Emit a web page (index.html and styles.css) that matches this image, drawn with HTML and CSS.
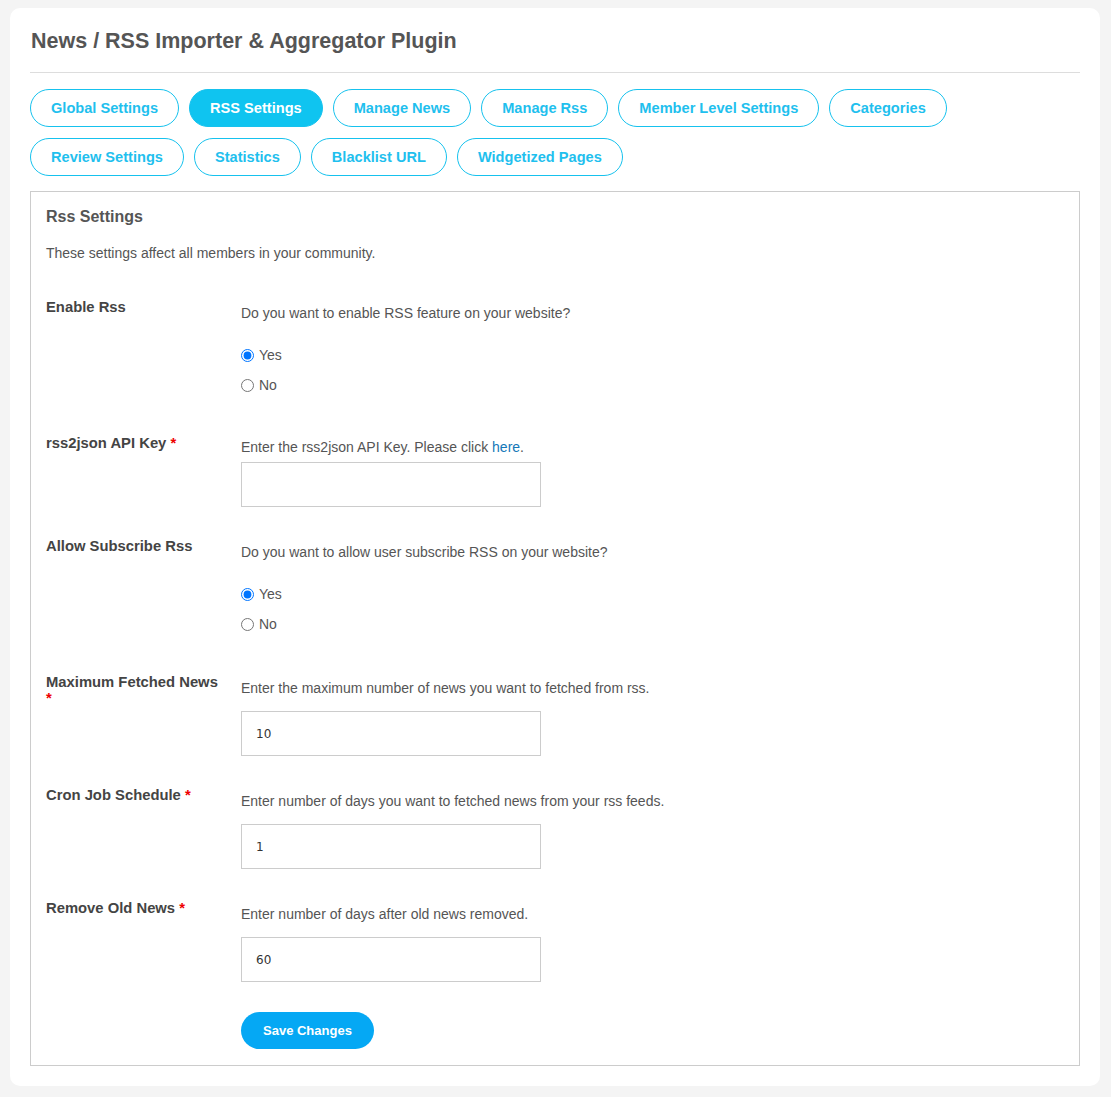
FILE: index.html
```html
<!DOCTYPE html>
<html lang="en">
<head>
  <meta charset="UTF-8">
  <meta name="viewport" content="width=device-width, initial-scale=1.0">
  <title>News / RSS Importer &amp; Aggregator Plugin</title>
  <link rel="stylesheet" href="styles.css">
</head>
<body>
  <div class="card">
    <h1>News / RSS Importer &amp; Aggregator Plugin</h1>

    <div class="tabs">
      <a class="tab" href="#">Global Settings</a>
      <a class="tab active" href="#">RSS Settings</a>
      <a class="tab" href="#">Manage News</a>
      <a class="tab" href="#">Manage Rss</a>
      <a class="tab" href="#">Member Level Settings</a>
      <a class="tab" href="#">Categories</a>
      <a class="tab" href="#">Review Settings</a>
      <a class="tab" href="#">Statistics</a>
      <a class="tab" href="#">Blacklist URL</a>
      <a class="tab" href="#">Widgetized Pages</a>
    </div>

    <form class="settings">
      <h2>Rss Settings</h2>
      <p class="intro">These settings affect all members in your community.</p>

      <div class="form-row radios-row">
        <div class="label">Enable Rss</div>
        <div class="field">
          <p class="hint">Do you want to enable RSS feature on your website?</p>
          <div class="radios">
            <label><input type="radio" name="enable" checked> Yes</label>
            <label><input type="radio" name="enable"> No</label>
          </div>
        </div>
      </div>

      <div class="form-row">
        <div class="label">rss2json API Key <span class="req">*</span></div>
        <div class="field">
          <p class="hint tight">Enter the rss2json API Key. Please click <a href="#">here</a>.</p>
          <input class="text close" type="text">
        </div>
      </div>

      <div class="form-row radios-row">
        <div class="label">Allow Subscribe Rss</div>
        <div class="field">
          <p class="hint">Do you want to allow user subscribe RSS on your website?</p>
          <div class="radios">
            <label><input type="radio" name="subscribe" checked> Yes</label>
            <label><input type="radio" name="subscribe"> No</label>
          </div>
        </div>
      </div>

      <div class="form-row">
        <div class="label">Maximum Fetched News <span class="req">*</span></div>
        <div class="field">
          <p class="hint">Enter the maximum number of news you want to fetched from rss.</p>
          <input class="text" type="text" value="10">
        </div>
      </div>

      <div class="form-row">
        <div class="label">Cron Job Schedule <span class="req">*</span></div>
        <div class="field">
          <p class="hint">Enter number of days you want to fetched news from your rss feeds.</p>
          <input class="text" type="text" value="1">
        </div>
      </div>

      <div class="form-row">
        <div class="label">Remove Old News <span class="req">*</span></div>
        <div class="field">
          <p class="hint">Enter number of days after old news removed.</p>
          <input class="text" type="text" value="60">
          <button type="button" class="save">Save Changes</button>
        </div>
      </div>
    </form>
  </div>
</body>
</html>
```

FILE: styles.css
```css
body {
  margin: 0;
  padding: 8px 11px 12px 10px;
  background-color: #f4f4f4;
  font-family: 'Liberation Sans', Arial, sans-serif;
  font-size: 14px;
  color: #555;
}

.card {
  background-color: #fff;
  border-radius: 10px;
  padding: 21px 20px 20px;
}

h1 {
  margin: 0;
  padding-bottom: 19px;
  border-bottom: 1px solid #ddd;
  font-size: 21.5px;
  line-height: 24px;
  color: #555;
  padding-left: 1px;
}

.tabs {
  display: flex;
  flex-wrap: wrap;
  gap: 11px 10px;
  margin-top: 16px;
  max-width: 940px;
}

.tab {
  display: block;
  height: 36px;
  line-height: 36px;
  padding: 0 20px;
  border: 1px solid #16c2ee;
  border-radius: 20px;
  color: #1fc0ee;
  font-weight: bold;
  font-size: 14.6px;
  text-decoration: none;
}

.tab.active {
  background-color: #0fc4f0;
  color: #fff;
}

.settings {
  margin-top: 15px;
  border: 1px solid #ccc;
  padding: 15px 15px 16px;
}

.settings h2 {
  margin: 0;
  font-size: 16px;
  line-height: 20px;
  color: #555;
}

.intro {
  margin: 17px 0 0;
  font-size: 14px;
  line-height: 18px;
}

.form-row {
  display: flex;
  margin-top: 36px;
}

.form-row + .form-row {
  margin-top: 30px;
}

.radios-row + .form-row {
  margin-top: 40px;
}

.form-row + .radios-row {
  margin-top: 30px;
}

.label {
  width: 180px;
  padding-right: 15px;
  font-weight: bold;
  font-size: 14.8px;
  line-height: 16px;
  color: #444;
  padding-top: 1px;
}

.req {
  color: #e00;
}

.field {
  flex: 1;
}

.hint {
  margin: 6px 0 0;
  font-size: 14px;
  line-height: 18px;
}

.hint.tight {
  margin-top: 4px;
}

.hint a {
  color: #1578b8;
  text-decoration: none;
}

.radios {
  display: flex;
  flex-direction: column;
  gap: 12px;
  margin-top: 24px;
}

.radios label {
  display: flex;
  align-items: center;
  font-size: 14px;
  line-height: 18px;
}

.radios input {
  margin: 0 5px 0 0;
  width: 13px;
  height: 13px;
}

.text {
  display: block;
  box-sizing: border-box;
  width: 300px;
  height: 45px;
  margin-top: 14px;
  padding: 0 14px;
  border: 1px solid #ccc;
  font-family: 'DejaVu Sans', sans-serif;
  font-size: 12px;
  color: #333;
}

.text.close {
  margin-top: 6px;
}

.save {
  display: block;
  margin-top: 30px;
  height: 37px;
  padding: 0 22px;
  border: none;
  border-radius: 19px;
  background-color: #05a8f4;
  color: #fff;
  font-family: 'Liberation Sans', Arial, sans-serif;
  font-weight: bold;
  font-size: 13px;
}
```
